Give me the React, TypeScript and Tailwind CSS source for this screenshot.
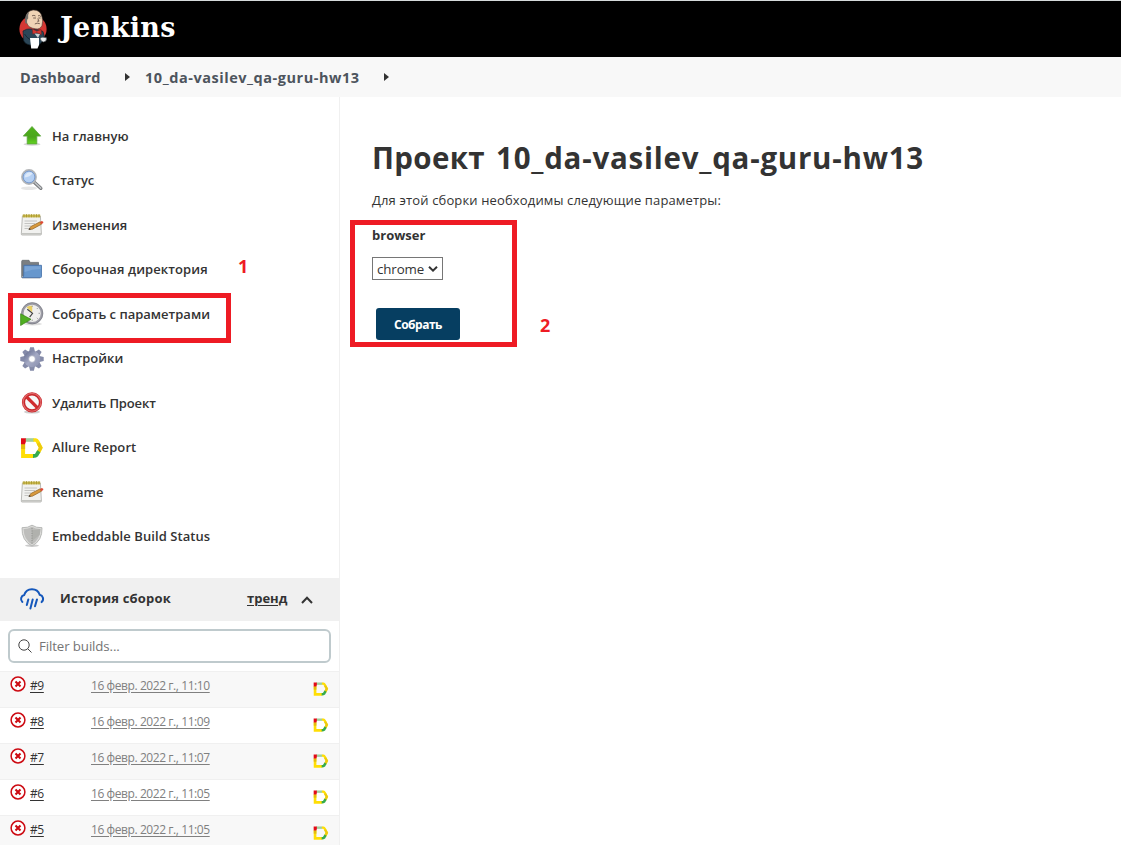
import React from "react";

type IconProps = { className?: string };

const HomeIcon = () => (
  <svg viewBox="0 0 24 24" className="size-6">
    <defs>
      <linearGradient id="up" x1="0" y1="0" x2="0" y2="1">
        <stop offset="0" stopColor="#4fb31a" />
        <stop offset="0.6" stopColor="#4aa51c" />
        <stop offset="1" stopColor="#62d420" />
      </linearGradient>
    </defs>
    <ellipse cx="12" cy="20.3" rx="8.5" ry="1.4" fill="#d5d5d5" />
    <path d="M12 2.5 L20.7 12.1 H16.8 V19.9 H7.2 V12.1 H3.3 Z" fill="url(#up)" stroke="#5aa53a" strokeWidth="0.8" />
  </svg>
);

const SearchIcon = () => (
  <svg viewBox="0 0 24 24" className="size-6">
    <ellipse cx="9" cy="19.3" rx="8" ry="1.8" fill="#e6e6e6" />
    <path d="M14.2 13.2 L20.8 19.3" stroke="#77797c" strokeWidth="3.4" strokeLinecap="round" />
    <path d="M15 13.8 L20.8 19.1" stroke="#c3c6c9" strokeWidth="1.5" strokeLinecap="round" />
    <circle cx="9" cy="8" r="7" fill="#b5d0f3" stroke="#b4b6b8" strokeWidth="1.8" />
    <circle cx="9" cy="8" r="5.9" fill="none" stroke="#6d93cc" strokeWidth="0.9" />
    <path d="M4.6 8.5 A5 5 0 0 1 12.5 4.2 Q10 8 4.6 8.5Z" fill="#dce9fa" />
  </svg>
);

const NotepadIcon = () => (
  <svg viewBox="0 0 24 24" className="size-6">
    <path d="M2.4 3 H20.4 L21.4 21 Q21.4 22 20.4 22 H2.1 Q1.2 22 1.3 21 Z" fill="#f1f1ef" stroke="#a9aaa6" strokeWidth="0.8" />
    <path d="M1.4 20 H21.2 V21.6 H1.4Z" fill="#c3c4c0" />
    <path d="M2.6 1.6 H20.2 V4.4 H2.6Z" fill="#c9b94e" />
    <path d="M4 1.2 V4.3 M6.5 1.2 V4.3 M9 1.2 V4.3 M11.5 1.2 V4.3 M14 1.2 V4.3 M16.5 1.2 V4.3 M19 1.2 V4.3" stroke="#a8962f" strokeWidth="0.9" />
    <path d="M4.5 8 H17 M4.5 10.5 H15 M4.5 13 H11 M4.5 15.5 H9" stroke="#c4c4c2" strokeWidth="1" />
    <path d="M9 16.4 L10.8 13.5 L20.2 8.8 L21.5 11.2 L12.3 16.2Z" fill="#d99a3d" stroke="#8e6227" strokeWidth="0.7" />
    <path d="M8.5 16.8 L9.6 15.1 L10.8 16.5Z" fill="#333" />
    <path d="M20 9 L21.8 8 Q23.8 8.3 23.3 10 L21.2 11.3Z" fill="#dd4935" />
  </svg>
);

const FolderIcon = () => (
  <svg viewBox="0 0 24 24" className="size-6">
    <path d="M1.7 3.3 Q1.7 2.3 2.7 2.3 H9 L10.2 4.4 H18.5 V19.5 H1.7Z" fill="#7b7f82" stroke="#5e6468" strokeWidth="0.7" />
    <path d="M2 18 H20 V20.4 H2Z" fill="#a7a9ab" />
    <path d="M3.9 7.3 H21.5 V18.6 Q21.5 19.6 20.4 19.6 H2.4 Q3.7 19 3.7 17Z" fill="#6797cd" stroke="#426ea8" strokeWidth="0.8" />
    <path d="M4.6 8.2 H20.6 V11 Q12 11.2 4.6 14Z" fill="#7ba5d6" />
  </svg>
);

const ClockIcon = () => (
  <svg viewBox="0 0 24 24" className="size-6">
    <ellipse cx="13" cy="22" rx="9" ry="1.4" fill="#dedede" />
    <circle cx="12.2" cy="11.3" r="9.7" fill="#efefed" stroke="#9c9ca6" strokeWidth="2.2" />
    <circle cx="12.2" cy="11.3" r="10.7" fill="none" stroke="#6c6d76" strokeWidth="0.6" />
    <path d="M6.5 5.2 Q9.5 3.4 12.3 3.8 L12.2 10.2Z" fill="#e9cf61" />
    <path d="M7.3 7.2 L12.6 11.4 L9.6 15.2" fill="none" stroke="#3f3f3f" strokeWidth="1.1" />
    <path d="M12.2 3.5 V5 M20 11.3 H18.5 M12.2 19 V17.5 M17.8 6 L16.8 7 M17.8 16.8 L16.8 15.8" stroke="#999" strokeWidth="0.9" />
    <path d="M.6 11.8 L11 17.3 L.6 23.5Z" fill="#4fae22" stroke="#368312" strokeWidth="0.7" />
  </svg>
);

const GearIcon = () => (
  <svg viewBox="0 0 24 24" className="size-6">
    <defs>
      <linearGradient id="gear" x1="0" y1="0" x2="1" y2="1">
        <stop offset="0" stopColor="#737a9b" />
        <stop offset="0.5" stopColor="#a4a9c4" />
        <stop offset="1" stopColor="#9298b5" />
      </linearGradient>
    </defs>
    <g fill="#858ba9">
      {[0, 45, 90, 135, 180, 225, 270, 315].map((a) => (
        <path key={a} d="M8.8 5.5 L10.1 .3 H13.9 L15.2 5.5Z" transform={`rotate(${a} 12 12)`} />
      ))}
    </g>
    <circle cx="12" cy="12" r="5.8" fill="none" stroke="url(#gear)" strokeWidth="5" />
    <circle cx="12" cy="12" r="3.4" fill="#fff" stroke="#8187a3" strokeWidth="0.6" />
  </svg>
);

const StopIcon = () => (
  <svg viewBox="0 0 24 24" className="size-6">
    <ellipse cx="12" cy="21" rx="8" ry="1.6" fill="#cfcfcf" />
    <circle cx="12" cy="11.3" r="8.5" fill="#f7f7f7" stroke="#c7282b" strokeWidth="3.2" />
    <path d="M6.2 5.5 L17.8 17.1" stroke="#d02b2e" strokeWidth="3.2" />
    <circle cx="12" cy="11.3" r="8.9" fill="none" stroke="#e2686a" strokeWidth="1.1" />
  </svg>
);

const AllureIcon = ({ className = "size-6" }: IconProps) => (
  <svg viewBox="0 0 24 24" className={className}>
    <path d="M5 4 H14" stroke="#a1cf9d" strokeWidth="3.6" />
    <path d="M13.4 4 H15.6 Q16.8 4.2 17.6 5.6 L20.8 11.8 L18.2 16.7" fill="none" stroke="#ffde05" strokeWidth="3.6" />
    <path d="M18.2 7 L20.7 11.8 L18.9 15.2" fill="none" stroke="#ebca10" strokeWidth="3.2" />
    <path d="M3.1 8 V20 H14" fill="none" stroke="#ffde05" strokeWidth="4" />
    <path d="M3.1 8 V13" stroke="#e2bb0d" strokeWidth="4" />
    <path d="M18.8 15.3 L16.6 19 Q15.8 20 13 20" fill="none" stroke="#35ab4c" strokeWidth="3.8" />
    <path d="M1 2.2 H5.8 V6 L5 8.3 H1Z" fill="#e30a17" />
  </svg>
);

const ShieldIcon = () => (
  <svg viewBox="0 0 24 24" className="size-6">
    <ellipse cx="12" cy="21.6" rx="7" ry="1.3" fill="#ccc" />
    <path d="M12 1.2 Q16 4 22 3.7 Q22.5 16.7 12 22 Q1.5 16.7 2 3.7 Q8 4 12 1.2Z" fill="#dcdcda" stroke="#b1b2b0" strokeWidth="0.9" />
    <path d="M12 2.8 Q7.5 5.2 3.6 5 Q3.7 15.5 12 20.4 Q20.3 15.5 20.4 5 Q16 5.2 12 2.8Z" fill="#bdbdbb" />
    <path d="M12 6 Q16 6 20.4 5 Q20.4 8 19.6 11 L12 17Z" fill="#b0b1ad" />
    <path d="M12 4 V20" stroke="#8d8e8b" strokeWidth="0.9" strokeDasharray="1.2 1.2" />
  </svg>
);

const RainIcon = () => (
  <svg viewBox="0 0 24 24" className="size-6 overflow-visible" fill="none" stroke="#1457bb" strokeWidth="2" strokeLinecap="round">
    <path d="M2.4 13.9 A4 4 0 0 1 4.2 7 A8.1 8.1 0 0 1 19.7 6.8 A4.2 4.2 0 0 1 21.6 14.1" />
    <path d="M8.3 11.4 L6.8 17 M12.7 11.4 L10.4 20.6 M17 11.4 L15 18.2" />
  </svg>
);

const FailIcon = () => (
  <svg viewBox="0 0 16 16" className="size-4">
    <circle cx="8" cy="8" r="6.9" fill="#fff" stroke="#cc0a12" strokeWidth="1.5" />
    <path d="M5.5 5.5 L10.5 10.5 M10.5 5.5 L5.5 10.5" stroke="#cc0a12" strokeWidth="2.1" />
  </svg>
);

const Butler = () => (
  <svg viewBox="0 0 28 40" className="h-10 w-7">
    <circle cx="14" cy="20" r="13.6" fill="#d33833" />
    <path d="M4 22 Q8 19.5 11 20 L20 21 L24 22.5 Q26 27 24.5 31 L20 36 H11 Q4 34.5 4.5 29 Z" fill="#2b4657" stroke="#13242e" strokeWidth="0.7" />
    <path d="M6.6 9.5 Q7 2 14 1 Q21.5 0.7 23 8 Q24.3 12 23 16.5 Q21 20.7 16.5 19.8 Q9.5 19 8 14.5 Q6.4 13 6.6 9.5Z" fill="#efd3b5" stroke="#4a3b35" strokeWidth="0.6" />
    <path d="M6.2 14.2 Q5 6 10.3 2.8 Q8.6 6 9.2 9.5 Q7.6 10 8.2 14.6Z" fill="#6d6c69" />
    <path d="M13 6.8 Q15 5.8 16.5 7 M19 6.8 Q21 6 22 7.6 M14.2 9 H17 M19.4 9 H21.6 M18.8 9.5 L20 12.2 H18.2 M15.8 15 Q18 13.4 20.8 14.7" fill="none" stroke="#5b463e" strokeWidth="0.8" />
    <path d="M13.4 20 L17.8 22.2 L22 20.4 L22.4 25.5 L17.8 23.8 L13.8 25Z" fill="#d33833" stroke="#81211f" strokeWidth="0.6" />
    <path d="M15.5 24.5 L21 25 L19 29Z" fill="#c9d1d4" />
    <path d="M11 29 H20 V36 L18.5 39.5 H12.2Z" fill="#fff" />
    <path d="M21.3 29.5 Q22 27.5 27.5 28.8 Q28 32.5 24.6 33 Q21.7 32.5 21.3 29.5Z" fill="#edeff0" stroke="#4b5358" strokeWidth="0.6" />
    <path d="M5.5 25 Q8 29 11 30.5" fill="none" stroke="#13242e" strokeWidth="0.8" />
  </svg>
);

const menu: { label: string; icon: React.ReactNode; track: string }[] = [
  { label: "На главную", icon: <HomeIcon />, track: "tracking-[0.02px]" },
  { label: "Статус", icon: <SearchIcon />, track: "tracking-[-0.05px]" },
  { label: "Изменения", icon: <NotepadIcon />, track: "tracking-[-0.03px]" },
  { label: "Сборочная директория", icon: <FolderIcon />, track: "tracking-[0.09px]" },
  { label: "Собрать с параметрами", icon: <ClockIcon />, track: "tracking-[0px]" },
  { label: "Настройки", icon: <GearIcon />, track: "tracking-[-0.03px]" },
  { label: "Удалить Проект", icon: <StopIcon />, track: "tracking-[-0.14px]" },
  { label: "Allure Report", icon: <AllureIcon />, track: "tracking-[0.09px]" },
  { label: "Rename", icon: <NotepadIcon />, track: "tracking-[0px]" },
  { label: "Embeddable Build Status", icon: <ShieldIcon />, track: "tracking-[0.07px]" },
];

const builds = [
  { id: "#9", time: "16 февр. 2022 г., 11:10" },
  { id: "#8", time: "16 февр. 2022 г., 11:09" },
  { id: "#7", time: "16 февр. 2022 г., 11:07" },
  { id: "#6", time: "16 февр. 2022 г., 11:05" },
  { id: "#5", time: "16 февр. 2022 г., 11:05" },
];

const Caret = () => (
  <svg viewBox="0 0 5 8" className="h-2 w-[5px]">
    <path d="M0 0 L5 4 L0 8Z" fill="#333" />
  </svg>
);

export default function App() {
  return (
    <div className="relative flex h-[845px] w-[1121px] flex-col overflow-hidden bg-white font-['Open_Sans','Noto_Sans',sans-serif] text-[#333]">
      <header className="flex h-[57px] shrink-0 items-center border-t border-[#d5dadb] bg-black pl-[19px]">
        <Butler />
        <span className="-mt-[4px] ml-[13px] whitespace-nowrap font-['DejaVu_Serif',serif] text-[27px] leading-none font-bold tracking-[0.35px] text-white">
          Jenkins
        </span>
      </header>

      <nav className="flex h-10 shrink-0 items-center bg-[#f8f8f8] pl-5 text-[14.5px] font-bold whitespace-nowrap text-[#4d545d]">
        <span className="w-[105px] pt-px tracking-[0.2px]">Dashboard</span>
        <Caret />
        <span className="ml-[15px] w-[239px] pt-px tracking-[0.54px]">10_da-vasilev_qa-guru-hw13</span>
        <Caret />
      </nav>

      <div className="flex min-h-0 flex-1">
        <aside className="flex w-[340px] shrink-0 flex-col border-r border-[#f0f0f0]">
          <ul className="flex h-[481px] shrink-0 flex-col pt-[17px]">
            {menu.map((m) => (
              <li key={m.label} className="flex h-[44.47px] shrink-0 items-center gap-2 pl-5">
                {m.icon}
                <span className={`pt-px text-[13px] font-semibold whitespace-nowrap ${m.track}`}>{m.label}</span>
              </li>
            ))}
          </ul>

          <div className="flex h-[43px] shrink-0 items-center bg-[#f0f0f0] pl-5 text-[13px] font-bold whitespace-nowrap">
            <RainIcon />
            <span className="ml-4 w-[187px] pb-0.5 tracking-[0.18px]">История сборок</span>
            <a className="w-[54px] pb-0.5 underline underline-offset-2">тренд</a>
            <svg viewBox="0 0 12 8" className="h-2 w-3" fill="none" stroke="#333" strokeWidth="2">
              <path d="M1 7 L6 1.8 L11 7" />
            </svg>
          </div>

          <div className="mx-2 mt-2 mb-2 flex h-[34px] w-[323px] shrink-0 items-center rounded-[6px] border-2 border-[#bfcacd] pl-2">
            <svg viewBox="0 0 14 14" className="size-3.5" fill="none" stroke="#444" strokeWidth="1">
              <circle cx="6" cy="6" r="5.2" />
              <path d="M9.8 9.8 L13.5 13.5" />
            </svg>
            <span className="ml-[7px] pt-px text-[13.3px] tracking-[-0.12px] text-[#757575]">Filter builds...</span>
          </div>

          {builds.map((b, i) => (
            <div
              key={b.id}
              className={`flex h-9 shrink-0 items-start border-t border-[#f0f0f0] pl-[10px] text-[12px] leading-4 whitespace-nowrap ${
                i % 2 === 0 ? "bg-[#f8f8f8]" : "bg-white"
              }`}
            >
              <span className="mt-1">
                <FailIcon />
              </span>
              <a className="mt-1.5 ml-1 w-[61px] tracking-[-0.4px] underline underline-offset-2">{b.id}</a>
              <span className="mt-1.5 w-[222px]">
                <a className="tracking-[-0.42px] text-[#808080] underline underline-offset-2">{b.time}</a>
              </span>
              <span className="mt-[9px]">
                <AllureIcon className="size-4" />
              </span>
            </div>
          ))}
        </aside>

        <main className="flex flex-col items-start pt-[39px] pl-8 whitespace-nowrap">
          <h1 className="h-11 text-[29.5px] leading-[44px] font-bold">
            <span className="mr-[3px] tracking-[0.35px]">Проект </span>
            <span className="tracking-[0.76px]">10_da-vasilev_qa-guru-hw13</span>
          </h1>
          <p className="mt-[10px] text-[13px] leading-5 tracking-[0.14px]">Для этой сборки необходимы следующие параметры:</p>
          <div className="mt-[15px] text-[13px] leading-5 font-bold">browser</div>
          <div className="mt-3 flex h-[23px] w-[71px] items-center border border-[#767676] pl-1 text-[13.3px]">
            <span className="w-[51px] pt-0.5 tracking-[-0.1px]">chrome</span>
            <svg viewBox="0 0 10 6" className="h-1.5 w-2.5" fill="none" stroke="#333" strokeWidth="2">
              <path d="M1 .8 L5 4.6 L9 .8" />
            </svg>
          </div>
          <button className="mt-7 ml-1 h-8 w-[84px] rounded-[3px] bg-[#063e61] pt-0.5 text-[12px] font-bold tracking-[-0.5px] text-white">
            Собрать
          </button>
        </main>
      </div>

      <div className="absolute top-[293px] left-[8px] h-[50px] w-[223px] border-5 border-[#ee1b24]" />
      <div className="absolute top-[220px] left-[350px] h-[127px] w-[167px] border-5 border-[#ee1b24]" />
      <span className="absolute top-[254px] left-[238px] text-[18px] leading-6 font-bold text-[#ee1b24]">1</span>
      <span className="absolute top-[313px] left-[540px] text-[18px] leading-6 font-bold text-[#ee1b24]">2</span>
    </div>
  );
}
